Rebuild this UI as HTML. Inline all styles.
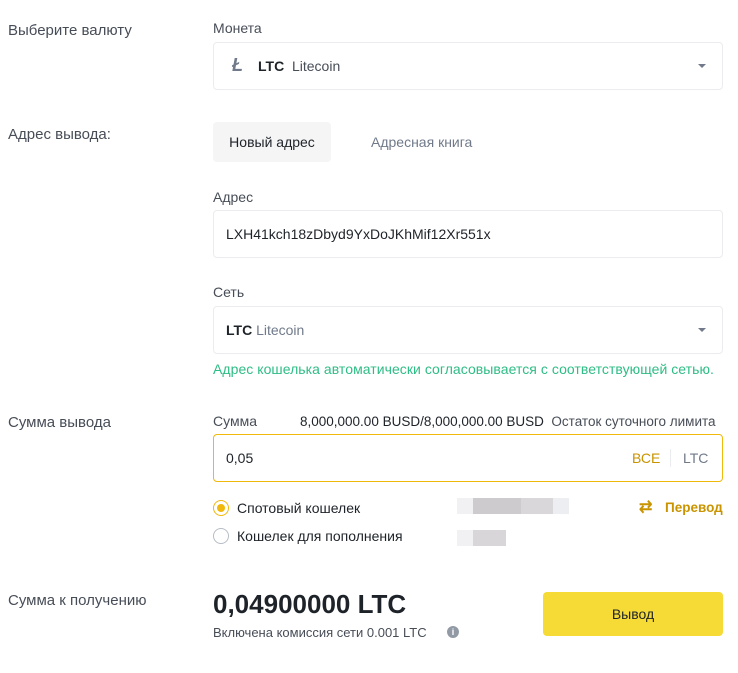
<!DOCTYPE html>
<html><head><meta charset="utf-8"><style>
*{margin:0;padding:0;box-sizing:border-box}
body{width:738px;height:673px;background:#fff;font-family:"Liberation Sans",sans-serif;color:#1e2329;position:relative;overflow:hidden}
.a{position:absolute;white-space:nowrap}
.lbl{font-size:15px;color:#474d57;left:8px}
.fl{font-size:14px;color:#474d57;left:213px}
.box{position:absolute;left:213px;width:510px;border:1px solid #eaecef;border-radius:4px}
.caret{position:absolute;right:16px;width:0;height:0;border-left:4px solid transparent;border-right:4px solid transparent;border-top:4px solid #707a8a}
.blur{position:absolute;height:16px}
</style></head><body>
<div class="a lbl" style="top:22px">Выберите валюту</div>
<div class="a fl" style="top:20px">Монета</div>
<div class="box" style="top:42px;height:48px">
 <div class="a" style="left:18px;top:12px;font-size:18px;font-weight:bold;font-style:italic;color:#707a8a">Ł</div>
 <div class="a" style="left:44px;top:15px;font-size:14px"><b>LTC</b>&nbsp; <span style="color:#474d57">Litecoin</span></div>
 <div class="caret" style="top:21px"></div>
</div>
<div class="a lbl" style="top:126px">Адрес вывода:</div>
<div class="a" style="left:213px;top:122px;width:118px;height:40px;background:#f5f5f5;border-radius:4px;font-size:14px;color:#1e2329;text-align:center;line-height:40px">Новый адрес</div>
<div class="a" style="left:371px;top:134px;font-size:14px;color:#707a8a">Адресная книга</div>
<div class="a fl" style="top:189px">Адрес</div>
<div class="box" style="top:210px;height:48px">
 <div class="a" style="left:12px;top:15px;font-size:14px">LXH41kch18zDbyd9YxDoJKhMif12Xr551x</div>
</div>
<div class="a fl" style="top:284px">Сеть</div>
<div class="box" style="top:306px;height:48px">
 <div class="a" style="left:12px;top:15px;font-size:14px"><b>LTC</b> <span style="color:#707a8a">Litecoin</span></div>
 <div class="caret" style="top:21px"></div>
</div>
<div class="a" style="left:213px;top:361px;font-size:14px;color:#2ebd85;letter-spacing:0.05px">Адрес кошелька автоматически согласовывается с соответствующей сетью.</div>
<div class="a lbl" style="top:414px">Сумма вывода</div>
<div class="a fl" style="top:413px">Сумма</div>
<div class="a" style="left:300px;top:414px;font-size:13.5px;color:#1e2329">8,000,000.00 BUSD/8,000,000.00 BUSD <span style="color:#474d57">&nbsp;Остаток суточного лимита</span></div>
<div class="box" style="top:434px;height:48px;border-color:#f0b90b">
 <div class="a" style="left:12px;top:15px;font-size:14px">0,05</div>
 <div class="a" style="left:418px;top:15px;font-size:14px;color:#c99400">ВСЕ</div>
 <div class="a" style="left:456px;top:14px;width:1px;height:18px;background:#eaecef"></div>
 <div class="a" style="left:469px;top:15px;font-size:14px;color:#707a8a">LTC</div>
</div>
<div class="a" style="left:213px;top:500px;width:16px;height:16px;border:1px solid #f0b90b;border-radius:50%"><div class="a" style="left:3px;top:3px;width:8px;height:8px;border-radius:50%;background:#f0b90b"></div></div>
<div class="a" style="left:237px;top:500px;font-size:14px;color:#1e2329">Спотовый кошелек</div>
<div class="blur" style="left:457px;top:498px;width:16px;background:#f1f0f2"></div>
<div class="blur" style="left:473px;top:498px;width:48px;background:#cecbce"></div>
<div class="blur" style="left:521px;top:498px;width:32px;background:#d9d7d9"></div>
<div class="blur" style="left:553px;top:498px;width:16px;background:#eceef1"></div>
<div class="a" style="left:639px;top:497px;font-size:16px;color:#c99400;font-weight:bold">⇄</div>
<div class="a" style="left:665px;top:500px;font-size:13.5px;color:#c99400;font-weight:bold">Перевод</div>
<div class="a" style="left:213px;top:528px;width:16px;height:16px;border:1px solid #b7bdc6;border-radius:50%"></div>
<div class="a" style="left:237px;top:528px;font-size:14px;color:#1e2329">Кошелек для пополнения</div>
<div class="blur" style="left:457px;top:530px;width:16px;background:#f1f0f2"></div>
<div class="blur" style="left:473px;top:530px;width:33px;background:#d8d6d8"></div>
<div class="a lbl" style="top:592px">Сумма к получению</div>
<div class="a" style="left:213px;top:589px;font-size:26px;font-weight:bold;color:#1e2329">0,04900000 LTC</div>
<div class="a" style="left:213px;top:625px;font-size:13px;color:#474d57">Включена комиссия сети 0.001 LTC</div>
<div class="a" style="left:447px;top:626px;width:12px;height:12px;border-radius:50%;background:#929aa5;color:#fff;font-size:9px;font-weight:bold;text-align:center;line-height:12px">i</div>
<div class="a" style="left:543px;top:592px;width:180px;height:44px;background:#f6da35;border-radius:4px;font-size:14px;text-align:center;line-height:44px;color:#1e2329">Вывод</div>
</body></html>
